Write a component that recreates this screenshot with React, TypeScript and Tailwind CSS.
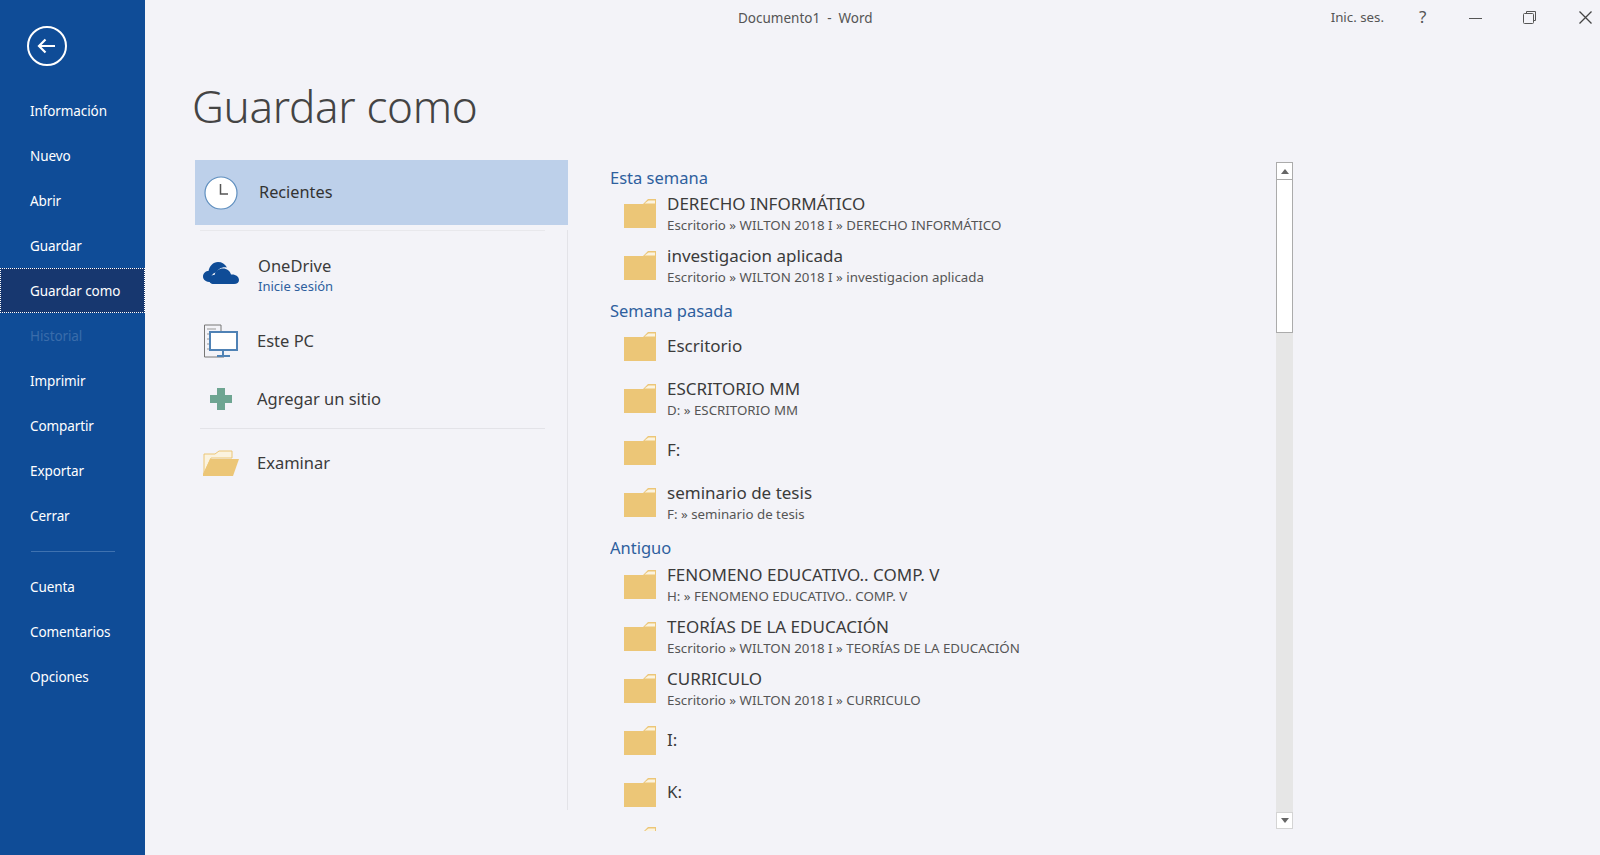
const font = '[font-family:"Noto_Sans",sans-serif]';

const menuTop = ['Información', 'Nuevo', 'Abrir', 'Guardar', 'Guardar como', 'Historial', 'Imprimir', 'Compartir', 'Exportar', 'Cerrar'];
const menuBottom = ['Cuenta', 'Comentarios', 'Opciones'];

type Folder = { name: string; path?: string };
type Group = { title: string; folders: Folder[] };

const groups: Group[] = [
  {
    title: 'Esta semana',
    folders: [
      { name: 'DERECHO INFORMÁTICO', path: 'Escritorio » WILTON 2018 I » DERECHO INFORMÁTICO' },
      { name: 'investigacion aplicada', path: 'Escritorio » WILTON 2018 I » investigacion aplicada' },
    ],
  },
  {
    title: 'Semana pasada',
    folders: [
      { name: 'Escritorio' },
      { name: 'ESCRITORIO MM', path: 'D: » ESCRITORIO MM' },
      { name: 'F:' },
      { name: 'seminario de tesis', path: 'F: » seminario de tesis' },
    ],
  },
  {
    title: 'Antiguo',
    folders: [
      { name: 'FENOMENO EDUCATIVO.. COMP. V', path: 'H: » FENOMENO EDUCATIVO.. COMP. V' },
      { name: 'TEORÍAS DE LA EDUCACIÓN', path: 'Escritorio » WILTON 2018 I » TEORÍAS DE LA EDUCACIÓN' },
      { name: 'CURRICULO', path: 'Escritorio » WILTON 2018 I » CURRICULO' },
      { name: 'I:' },
      { name: 'K:' },
      // only the tip of this folder shows above the clip, its label is out of view
      { name: '' },
    ],
  },
];

function FolderIcon() {
  return (
    <svg width="32" height="29" viewBox="0 0 32 29" className="shrink-0">
      <path d="M0 5h19l5-5h8v29H0z" fill="#ecc677" />
      <path d="M20.500 4.500l4-3H31v3z" fill="#fbf3df" />
    </svg>
  );
}

function MenuItem({ label }: { label: string }) {
  const active = label === 'Guardar como';
  const disabled = label === 'Historial';
  return (
    <div
      className={`flex h-[45px] items-center pt-[2px] text-[13.500px] tracking-[-0.1px] ${
        active ? 'border border-dotted border-white bg-[#17376f] pl-[29px] text-white' : disabled ? 'pl-[30px] text-[#3a6cab]' : 'pl-[30px] text-white'
      }`}
    >
      {label}
    </div>
  );
}

function Sidebar() {
  return (
    <div className="h-full w-[145px] shrink-0 bg-[#0f4c97]">
      <div className="flex h-[88px] items-start pt-[26px] pl-[27px]">
        <svg width="40" height="40" viewBox="0 0 40 40" fill="none" stroke="white">
          <circle cx="20" cy="20" r="19" strokeWidth="2" />
          <path d="M12 20h16M18.500 13.500L12 20l6.500 6.500" strokeWidth="2.200" />
        </svg>
      </div>
      {menuTop.map((m) => (
        <MenuItem key={m} label={m} />
      ))}
      <div className="mt-[13px] mb-[12px] ml-[31px] h-px w-[84px] bg-[#3f72b0]" />
      {menuBottom.map((m) => (
        <MenuItem key={m} label={m} />
      ))}
    </div>
  );
}

function TitleBar() {
  return (
    <div className="flex h-[36px] items-center text-[13.300px] text-[#555]">
      <div className="pl-[593px] text-[13.500px]">Documento1&nbsp; -&nbsp; Word</div>
      <div className="ml-[458px]">Inic. ses.</div>
      <div className="ml-[35px] -mt-[2px] text-[17px]">?</div>
      <svg className="ml-[43px]" width="13" height="13" viewBox="0 0 13 13" stroke="#555" fill="none">
        <path d="M0 6.500h13" />
      </svg>
      <svg className="ml-[41px] -mt-[1px]" width="13" height="13" viewBox="0 0 13 13" stroke="#555" fill="none">
        <path d="M3.500 2.500V.5h9v9h-2.500" />
        <rect x="0.500" y="2.500" width="10" height="10" rx="1" />
      </svg>
      <svg className="ml-[43px] -mt-[1px]" width="13" height="13" viewBox="0 0 13 13" stroke="#444" fill="none" strokeWidth="1.300">
        <path d="M.5.5l12 12M12.500.5l-12 12" />
      </svg>
    </div>
  );
}

function Places() {
  return (
    <div className="w-[373px] shrink-0 pt-[2px]">
      <div className="flex h-[65px] items-center bg-[#bdd0ea] pl-[9px] text-[#333]">
        <svg width="34" height="34" viewBox="0 0 34 34">
          <circle cx="17" cy="17" r="16" fill="white" stroke="#5f8fbf" strokeWidth="1.200" />
          <path d="M16.500 8v10h7.500" fill="none" stroke="#555" strokeWidth="1.500" />
        </svg>
        <span className="ml-[21px] text-[16.300px]">Recientes</span>
      </div>
      <div className="h-[580px] w-full border-r border-[#e3e3e8] text-[16.500px] text-[#3b3b3b]">
        <div className="mx-[5px] mt-[5px] h-px w-[345px] bg-[#e8e8ec]" />
        <div className="mt-[7px] flex h-[74px] items-center pl-[8px]">
          <svg width="36" height="22" viewBox="0 0 36 22" fill="#0f4c97" className="-mt-[4px] shrink-0">
            <path d="M8 20C3 20 0 18 0 14.500 0 11 3 9 5.500 9 6.500 4 10 0 15 0c4 0 7 2 9 5.500-5-1-9 1.500-10.500 5C9.500 10.500 7 15 8 20z" />
            <path d="M11 22c-3.500 0-5-2-5-4.500 0-3 2.500-4.500 5.500-4.500 1-4 4.500-6.500 8.500-6.500s7 2.500 8 6c4.500-.5 8 2 8 5.500 0 2.500-2 4-5 4z" />
          </svg>
          <div className="-mt-[2px] ml-[19px]">
            <div className="leading-[24px]">OneDrive</div>
            <div className="text-[13px] leading-[17px] text-[#2e5f9e]">Inicie sesión</div>
          </div>
        </div>
        <div className="flex h-[58px] items-center pl-[9px]">
          <svg width="34" height="34" viewBox="0 0 34 34" fill="none" className="shrink-0">
            <path d="M17 7V1H.5v32H20" stroke="#777" />
            <path d="M3 5h9M3 10h3M3 15h3M3 20h3M3 25h3" stroke="#999" />
            <rect x="6" y="8" width="27" height="18" fill="white" stroke="#4f82b5" strokeWidth="2" />
            <path d="M19 26v5M13 32h13" stroke="#4f82b5" strokeWidth="2" />
          </svg>
          <span className="ml-[19px]">Este PC</span>
        </div>
        <div className="flex h-[58px] items-center pl-[14px]">
          <svg width="24" height="24" viewBox="0 0 24 24" fill="#6ea592" className="shrink-0">
            <path d="M8 1h8v7h7v8h-7v7H8v-7H1V8h7z" />
          </svg>
          <span className="ml-[24px]">Agregar un sitio</span>
        </div>
        <div className="mx-[5px] h-px w-[345px] bg-[#e3e3e8]" />
        <div className="flex h-[68px] items-center pl-[8px]">
          <svg width="36" height="26" viewBox="0 0 36 26" className="shrink-0">
            <path d="M1 24V4h11l4-3h13v7H8z" fill="#fbf3df" stroke="#ecc677" />
            <path d="M0 26V24L7 9h29l-6 17z" fill="#ecc677" />
          </svg>
          <span className="ml-[18px]">Examinar</span>
        </div>
      </div>
    </div>
  );
}

function RecentList() {
  return (
    <div className="ml-[42px] h-[673px] w-[666px] shrink-0 overflow-hidden">
      {groups.map((g) => (
        <div key={g.title}>
          <div className={`pt-[8px] text-[16.500px] leading-[24px] text-[#2e5f9e] ${g.title === 'Antiguo' ? 'h-[30px]' : 'h-[29px]'}`}>
            {g.title}
          </div>
          {g.folders.map((f) => (
            <div key={f.name} className={`flex items-center pl-[14px] ${f.name ? 'h-[52px]' : 'h-[46px]'}`}>
              <FolderIcon />
              <div className="ml-[11px] text-[#3b3b3b]">
                <div className="text-[17px] leading-[24px]">{f.name}</div>
                {f.path && <div className="text-[13.300px] leading-[18px] text-[#555]">{f.path}</div>}
              </div>
            </div>
          ))}
        </div>
      ))}
    </div>
  );
}

function Scrollbar() {
  return (
    <div className="mt-[4px] flex h-[667px] w-[17px] shrink-0 flex-col bg-[#e6e6e6]">
      <div className="flex h-[18px] items-center justify-center border border-[#ababab] bg-white">
        <div className="h-0 w-0 border-x-[4px] border-b-[5px] border-x-transparent border-b-[#666]" />
      </div>
      <div className="h-[153px] border border-t-0 border-[#ababab] bg-white" />
      <div className="flex-1" />
      <div className="flex h-[17px] items-center justify-center border border-[#d4d4d4] bg-white">
        <div className="h-0 w-0 border-x-[4px] border-t-[5px] border-x-transparent border-t-[#666]" />
      </div>
    </div>
  );
}

export default function App() {
  return (
    <div className={`flex h-[855px] w-[1600px] overflow-hidden bg-[#f3f3f8] ${font}`}>
      <Sidebar />
      <div className="flex-1">
        <TitleBar />
        <div className="flex h-[122px] items-start pl-[47px] pt-[36px]">
          <h1 className="text-[44px] leading-[68px] font-light tracking-[-0.3px] text-[#444]">Guardar como</h1>
        </div>
        <div className="flex pl-[50px]">
          <Places />
          <RecentList />
          <Scrollbar />
        </div>
      </div>
    </div>
  );
}
